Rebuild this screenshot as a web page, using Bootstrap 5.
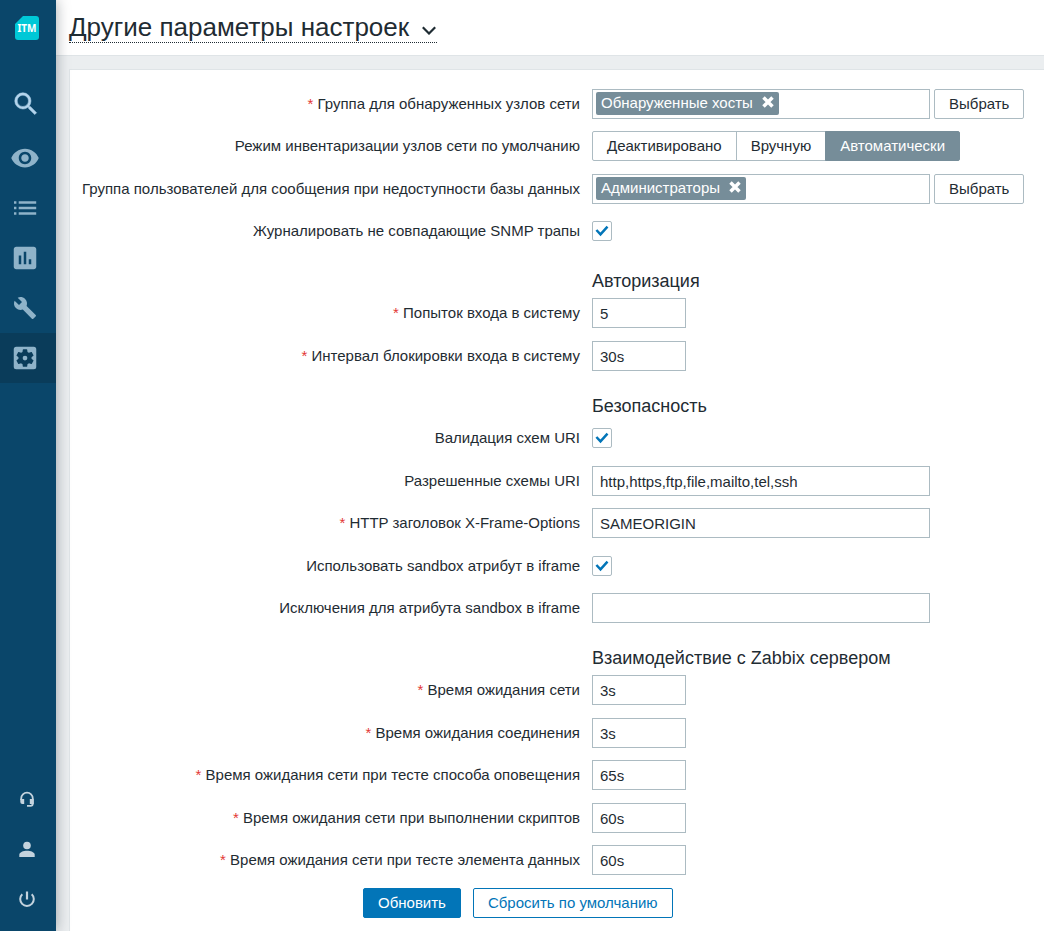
<!DOCTYPE html>
<html lang="ru">
<head>
<meta charset="utf-8">
<meta name="viewport" content="width=device-width, initial-scale=1">
<title>Другие параметры настроек</title>
<link href="https://cdn.jsdelivr.net/npm/bootstrap@5.3.0/dist/css/bootstrap.min.css" rel="stylesheet">
<style>
  body { font-family: "Liberation Sans", Arial, sans-serif; font-size: 15px; line-height: 20px; color: #1f2c33; background: #ebeef0; }

  .side { width: 56px; height: 100vh; background: #0a466a; box-shadow: 0 0 13px rgba(0, 20, 30, .35); z-index: 10; padding-bottom: 7px; }
  .side-logo { height: 79px; padding: 16px 0 0 15px; }
  .side a { height: 50px; color: #8fb3c9; padding-right: 6px; }
  .side a:hover, .side a.active { background: #0a3c5a; }
  .side a.side-search { color: #b3d4ec; margin-bottom: 4px; padding-right: 4px; }
  .side .side-user a { color: #c4d3de; padding-right: 3px; }

  .page-head { height: 56px; background: #fff; border-bottom: 1px solid #dfe4e7; padding: 12px 13px; }
  .title-toggle { font-size: 26px; line-height: 30px; color: #1f2c33; border-bottom: 1px dotted #1f2c33; gap: 12px; }

  .sheet { margin: 13px 0 0 13px; padding: 19px 12px 13px; background: #fff; border: 1px solid #dfe4e7; border-width: 1px 0 0 1px; }
  .field { display: grid; grid-template-columns: minmax(0, 498px) minmax(0, 1fr); column-gap: 12px; align-items: center; min-height: 30px; margin-bottom: 12px; }
  .field:nth-child(even):not(:last-child) { margin-bottom: 13px; }
  .field-name { text-align: right; }
  .req::before { content: "* "; color: #e33734; }
  .sect-title { font-size: 18px; line-height: 22px; font-weight: 400; margin: 0 0 0 510px; padding: 12px 0 6px; }

  .form-control { height: 30px; border: 1px solid #acbbc2; border-radius: 0; padding: 0 7px; font-size: 15px; line-height: 20px; color: #1f2c33; max-width: 338px; }
  .form-control.short { max-width: 94px; }
  .form-check-input[type=checkbox] { width: 20px; height: 20px; margin: 0; border: 1px solid #acbbc2; border-radius: 2px; }
  .form-check-input:checked[type=checkbox] { background-color: #fff; border-color: #acbbc2; background-size: 18px 18px;
    background-image: url("data:image/svg+xml,%3Csvg xmlns='http://www.w3.org/2000/svg' viewBox='0 0 18 18'%3E%3Cpath d='M3.400 8l4.100 4.300 7-7.600' fill='none' stroke='%230275b8' stroke-width='2.500'/%3E%3C/svg%3E"); }

  .picker { width: 338px; height: 30px; border: 1px solid #acbbc2; padding: 2px 3px; }
  .picker input { min-width: 0; border: 0; outline: 0; background: transparent; }
  .tag { height: 23px; background: #768d99; color: #fff; border-radius: 2px; padding: 0 5px; line-height: 22px; white-space: nowrap; }
  .tag button { border: 0; padding: 0; background: none; color: #fff; margin-left: 9px; width: 12px; height: 20px; }
  .tag svg { display: block; }

  .btn { --bs-btn-font-size: 15px; --bs-btn-line-height: 20px; --bs-btn-padding-y: 4px; --bs-btn-padding-x: 14px; --bs-btn-border-radius: 2px; white-space: nowrap; }
  .btn-plain { --bs-btn-color: #1f2c33; --bs-btn-bg: #fff; --bs-btn-border-color: #acbbc2; --bs-btn-hover-bg: #f2f4f5; --bs-btn-hover-border-color: #768d99;
    --bs-btn-active-color: #fff; --bs-btn-active-bg: #768d99; --bs-btn-active-border-color: #768d99; }
  .btn-primary { --bs-btn-bg: #0275b8; --bs-btn-border-color: #0275b8; }
  .btn-outline-primary { --bs-btn-color: #0275b8; --bs-btn-border-color: #0275b8; --bs-btn-hover-bg: #0275b8; }
  .actions { padding-left: 281px; gap: 12px; margin-top: 13px; }
  section:last-of-type .field:last-child { margin-bottom: 0; }
</style>
</head>
<body>
<div class="d-flex align-items-stretch min-vh-100">

  <aside class="side sticky-top flex-shrink-0 d-flex flex-column">
    <div class="side-logo">
      <svg width="24" height="24" viewBox="0 0 24 24" role="img" aria-label="ITM">
        <path d="M8 0h13a3 3 0 0 1 3 3v18a3 3 0 0 1-3 3H3a3 3 0 0 1-3-3V8z" fill="#00c8d7"/>
        <text x="12" y="16" text-anchor="middle" font-family="Noto Sans, sans-serif" font-weight="700" font-size="10" fill="#fff">ITM</text>
      </svg>
    </div>
    <a href="#" class="side-search d-flex align-items-center justify-content-center" aria-label="Поиск">
      <svg width="30" height="30" viewBox="0 0 24 24" fill="currentColor" stroke="currentColor" stroke-width=".4"><path d="M15.500 14h-.79l-.28-.27A6.470 6.470 0 0 0 16 9.500 6.500 6.500 0 1 0 9.500 16c1.610 0 3.090-.59 4.230-1.570l.27.280v.79l5 4.990L20.490 19l-4.990-5zm-6 0C7.010 14 5 11.990 5 9.500S7.010 5 9.500 5 14 7.010 14 9.500 11.990 14 9.500 14z"/></svg>
    </a>
    <nav>
      <a href="#" class="d-flex align-items-center justify-content-center" aria-label="Мониторинг">
        <svg width="30" height="30" viewBox="0 0 24 24" fill="currentColor"><path d="M12 4.500C7 4.500 2.730 7.610 1 12c1.730 4.390 6 7.500 11 7.500s9.270-3.110 11-7.500c-1.730-4.390-6-7.500-11-7.500zM12 17c-2.760 0-5-2.240-5-5s2.240-5 5-5 5 2.240 5 5-2.240 5-5 5zm0-8c-1.660 0-3 1.340-3 3s1.340 3 3 3 3-1.340 3-3-1.340-3-3-3z"/></svg>
      </a>
      <a href="#" class="d-flex align-items-center justify-content-center" aria-label="Инвентаризация">
        <svg width="24" height="24" viewBox="0 0 24 24" fill="currentColor"><path d="M1 5.300h2.400v2.400H1zM5.700 5.300h17.500v2.400H5.700zM1 10.800h2.400v2.400H1zM5.700 10.800h17.500v2.400H5.700zM1 16.300h2.400v2.400H1zM5.700 16.300h17.500v2.400H5.700z"/></svg>
      </a>
      <a href="#" class="d-flex align-items-center justify-content-center" aria-label="Отчеты">
        <svg width="30" height="30" viewBox="0 0 24 24" fill="currentColor"><path d="M19 3H5c-1.100 0-2 .9-2 2v14c0 1.100.9 2 2 2h14c1.100 0 2-.9 2-2V5c0-1.100-.9-2-2-2zM9 17H7v-7h2v7zm4 0h-2V7h2v10zm4 0h-2v-4h2v4z"/></svg>
      </a>
      <a href="#" class="d-flex align-items-center justify-content-center" aria-label="Настройка">
        <svg width="24" height="24" viewBox="0 0 24 24" fill="currentColor"><path d="M22.700 19l-9.100-9.100c.9-2.300.4-5-1.500-6.900-2-2-5-2.400-7.400-1.300L9 6 6 9 1.600 4.700C.4 7.100.9 10.100 2.900 12.100c1.900 1.900 4.600 2.400 6.900 1.500l9.100 9.100c.4.4 1 .4 1.400 0l2.300-2.300c.5-.4.5-1.100.1-1.400z"/></svg>
      </a>
      <a href="#" class="active d-flex align-items-center justify-content-center" aria-label="Администрирование" aria-current="page">
        <svg width="30" height="30" viewBox="0 0 24 24" fill="currentColor"><path fill-rule="evenodd" d="M5 3h14a2 2 0 0 1 2 2v14a2 2 0 0 1-2 2H5a2 2 0 0 1-2-2V5a2 2 0 0 1 2-2zM17.250 12c0-.23-.02-.46-.05-.68l1.480-1.160a.35.35 0 0 0 .08-.45l-1.400-2.420a.35.35 0 0 0-.43-.15l-1.740.7a5.100 5.100 0 0 0-1.180-.69l-.26-1.850A.36.36 0 0 0 13.400 5h-2.800a.36.36 0 0 0-.35.300l-.26 1.850c-.43.180-.82.410-1.180.69l-1.740-.7a.35.35 0 0 0-.43.150l-1.400 2.420a.35.35 0 0 0 .08.450l1.480 1.160a5.100 5.100 0 0 0 0 1.360l-1.480 1.160a.35.35 0 0 0-.08.450l1.400 2.420c.09.150.27.210.43.150l1.740-.7c.36.280.75.510 1.180.69l.26 1.850c.3.170.18.300.35.300h2.800c.17 0 .32-.13.350-.3l.26-1.850c.43-.18.820-.41 1.180-.69l1.740.7c.16.060.34 0 .43-.15l1.400-2.420a.35.35 0 0 0-.08-.45l-1.480-1.160c.03-.22.05-.45.05-.68zM12 10.100a1.900 1.900 0 1 1 0 3.800 1.900 1.900 0 0 1 0-3.800z"/></svg>
      </a>
    </nav>
    <nav class="side-user mt-auto">
      <a href="#" class="d-flex align-items-center justify-content-center" aria-label="Поддержка">
        <svg width="16" height="16" viewBox="0 0 16 16" fill="none" stroke="currentColor" stroke-width="1.800"><path d="M2.200 9V7.500a5.800 5.800 0 0 1 11.600 0v5c0 1.300-.8 2.300-2.200 2.300H8"/><path d="M1.300 8h3.900v5H3.300q-2 0-2-2zM14.700 8h-3.900v5h3.900z" fill="currentColor" stroke="none"/></svg>
      </a>
      <a href="#" class="d-flex align-items-center justify-content-center" aria-label="Профиль">
        <svg width="16" height="16" viewBox="0 0 16 16" fill="currentColor"><circle cx="8" cy="4.500" r="3.800"/><path d="M.3 16v-2.200C.3 11.300 4.500 9.800 8 9.800s7.700 1.500 7.700 4V16z"/></svg>
      </a>
      <a href="#" class="d-flex align-items-center justify-content-center" aria-label="Выход">
        <svg width="16" height="16" viewBox="0 0 16 16" fill="none" stroke="currentColor" stroke-width="2"><path d="M8 .5V8.500" stroke-width="2.200"/><path d="M3.300 3.200a6.800 6.800 0 1 0 9.400 0"/></svg>
      </a>
    </nav>
  </aside>

  <div class="d-flex flex-column flex-grow-1" style="min-width: 0">
    <header class="page-head">
      <h1 class="m-0 d-flex">
        <button type="button" class="title-toggle bg-transparent border-top-0 border-start-0 border-end-0 p-0 d-flex align-items-center">
          Другие параметры настроек
          <svg width="16" height="16" viewBox="0 0 16 16" fill="none" stroke="currentColor" stroke-width="2.200"><path d="M1.800 8.300L8 14.500 14.200 8.300"/></svg>
        </button>
      </h1>
    </header>

    <main class="sheet flex-grow-1">
      <form>
        <div>
          <div class="field">
            <label class="field-name req" for="group">Группа для обнаруженных узлов сети</label>
            <div class="d-flex gap-1">
              <div class="picker d-flex">
                <span class="tag d-flex">Обнаруженные хосты<button type="button" aria-label="Удалить"><svg width="12" height="20" viewBox="0 0 12 20" stroke="#fff" stroke-width="3.500"><path d="M1.500 5.500l9 9M10.500 5.500l-9 9"/></svg></button></span>
                <input type="text" id="group" class="flex-fill">
              </div>
              <button type="button" class="btn btn-plain">Выбрать</button>
            </div>
          </div>
          <div class="field">
            <span class="field-name" id="inv-name">Режим инвентаризации узлов сети по умолчанию</span>
            <div>
              <div class="btn-group d-inline-flex" role="group" aria-labelledby="inv-name">
                <input type="radio" class="btn-check" name="inv" id="inv0"><label class="btn btn-plain" for="inv0">Деактивировано</label>
                <input type="radio" class="btn-check" name="inv" id="inv1"><label class="btn btn-plain" for="inv1">Вручную</label>
                <input type="radio" class="btn-check" name="inv" id="inv2" checked><label class="btn btn-plain" for="inv2">Автоматически</label>
              </div>
            </div>
          </div>
          <div class="field">
            <label class="field-name" for="users">Группа пользователей для сообщения при недоступности базы данных</label>
            <div class="d-flex gap-1">
              <div class="picker d-flex">
                <span class="tag d-flex">Администраторы<button type="button" aria-label="Удалить"><svg width="12" height="20" viewBox="0 0 12 20" stroke="#fff" stroke-width="3.500"><path d="M1.500 5.500l9 9M10.500 5.500l-9 9"/></svg></button></span>
                <input type="text" id="users" class="flex-fill">
              </div>
              <button type="button" class="btn btn-plain">Выбрать</button>
            </div>
          </div>
          <div class="field">
            <label class="field-name" for="snmp">Журналировать не совпадающие SNMP трапы</label>
            <input type="checkbox" class="form-check-input" id="snmp" checked>
          </div>
        </div>

        <section>
          <h2 class="sect-title">Авторизация</h2>
          <div class="field">
            <label class="field-name req" for="tries">Попыток входа в систему</label>
            <input type="text" class="form-control short" id="tries" value="5">
          </div>
          <div class="field">
            <label class="field-name req" for="block">Интервал блокировки входа в систему</label>
            <input type="text" class="form-control short" id="block" value="30s">
          </div>
        </section>

        <section>
          <h2 class="sect-title">Безопасность</h2>
          <div class="field">
            <label class="field-name" for="uri">Валидация схем URI</label>
            <input type="checkbox" class="form-check-input" id="uri" checked>
          </div>
          <div class="field">
            <label class="field-name" for="schemes">Разрешенные схемы URI</label>
            <input type="text" class="form-control" id="schemes" value="http,https,ftp,file,mailto,tel,ssh">
          </div>
          <div class="field">
            <label class="field-name req" for="xframe">HTTP заголовок X-Frame-Options</label>
            <input type="text" class="form-control" id="xframe" value="SAMEORIGIN">
          </div>
          <div class="field">
            <label class="field-name" for="sandbox">Использовать sandbox атрибут в iframe</label>
            <input type="checkbox" class="form-check-input" id="sandbox" checked>
          </div>
          <div class="field">
            <label class="field-name" for="except">Исключения для атрибута sandbox в iframe</label>
            <input type="text" class="form-control" id="except">
          </div>
        </section>

        <section>
          <h2 class="sect-title">Взаимодействие с Zabbix сервером</h2>
          <div class="field">
            <label class="field-name req" for="t1">Время ожидания сети</label>
            <input type="text" class="form-control short" id="t1" value="3s">
          </div>
          <div class="field">
            <label class="field-name req" for="t2">Время ожидания соединения</label>
            <input type="text" class="form-control short" id="t2" value="3s">
          </div>
          <div class="field">
            <label class="field-name req" for="t3">Время ожидания сети при тесте способа оповещения</label>
            <input type="text" class="form-control short" id="t3" value="65s">
          </div>
          <div class="field">
            <label class="field-name req" for="t4">Время ожидания сети при выполнении скриптов</label>
            <input type="text" class="form-control short" id="t4" value="60s">
          </div>
          <div class="field">
            <label class="field-name req" for="t5">Время ожидания сети при тесте элемента данных</label>
            <input type="text" class="form-control short" id="t5" value="60s">
          </div>
        </section>

        <div class="actions d-flex">
          <button type="submit" class="btn btn-primary">Обновить</button>
          <button type="button" class="btn btn-outline-primary">Сбросить по умолчанию</button>
        </div>
      </form>
    </main>
  </div>
</div>
<script src="https://cdn.jsdelivr.net/npm/bootstrap@5.3.0/dist/js/bootstrap.bundle.min.js"></script>
</body>
</html>
